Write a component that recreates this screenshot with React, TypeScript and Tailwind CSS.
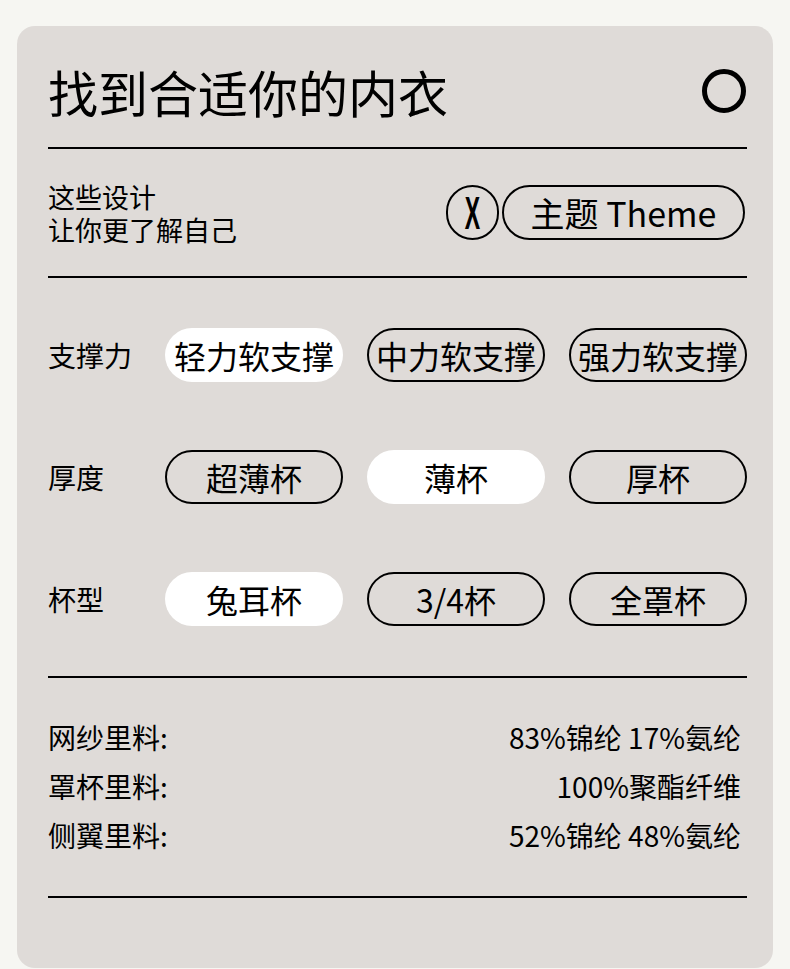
import React from "react";

const font = { fontFamily: '"Noto Sans CJK SC", "Noto Sans", sans-serif' };

function Pill({ text, active }: { text: string; active?: boolean }) {
  return (
    <div
      className={
        "flex h-[54px] w-[178px] items-center justify-center rounded-full text-[32px] leading-none text-black " +
        (active ? "bg-white" : "border-2 border-black")
      }
    >
      {text}
    </div>
  );
}

function Row({ label, items, activeIndex }: { label: string; items: string[]; activeIndex: number }) {
  return (
    <div className="flex h-[54px] items-center">
      <div className="w-[118px] text-[28px] leading-none text-black">{label}</div>
      <div className="flex gap-[24px]">
        {items.map((t, i) => (
          <Pill key={t} text={t} active={i === activeIndex} />
        ))}
      </div>
    </div>
  );
}

function Line() {
  return <div className="h-[2px] w-full bg-black" />;
}

export default function App() {
  return (
    <div className="min-h-[969px] w-[790px] bg-[#f6f6f2] pt-[26px]" style={font}>
      <div className="ml-[17px] w-[756px] rounded-[18px] bg-[#dfdbd8] pb-[70px] pl-[31px] pr-[26px]">
        {/* Header */}
        <div className="flex h-[121px] items-start pt-[39px]">
          <div className="flex h-[52px] w-full items-center justify-between">
            <div className="text-[50px] leading-none text-black">找到合适你的内衣</div>
            <div className="mr-[1px] h-[44px] w-[44px] rounded-full border-[5px] border-black" />
          </div>
        </div>
        <Line />
        {/* Theme */}
        <div className="flex h-[127px] items-center justify-between">
          <div className="flex flex-col text-[27px] leading-none text-black">
            <div className="h-[33px]">这些设计</div>
            <div className="h-[27px]">让你更了解自己</div>
          </div>
          <div className="flex items-center gap-[3px] pr-[2px]">
            <div className="flex h-[55px] w-[53px] items-center justify-center rounded-full border-2 border-black">
              <span
                className="inline-block scale-x-[0.5] text-[46px] font-bold leading-none text-black"
                style={{ fontFamily: '"Liberation Sans", sans-serif' }}
              >
                X
              </span>
            </div>
            <div className="flex h-[55px] w-[243px] items-center justify-center rounded-full border-2 border-black text-[34px] leading-none text-black">
              主题 Theme
            </div>
          </div>
        </div>
        <Line />
        {/* Options */}
        <div className="flex flex-col gap-[68px] py-[50px]">
          <Row label="支撑力" items={["轻力软支撑", "中力软支撑", "强力软支撑"]} activeIndex={0} />
          <Row label="厚度" items={["超薄杯", "薄杯", "厚杯"]} activeIndex={1} />
          <Row label="杯型" items={["兔耳杯", "3/4杯", "全罩杯"]} activeIndex={0} />
        </div>
        <Line />
        {/* Specs */}
        <div className="flex flex-col pb-[36px] pr-[6px] pt-[35px] text-[28px] leading-[49px] text-black">
          <div className="flex justify-between">
            <span>网纱里料:</span>
            <span>83%锦纶 17%氨纶</span>
          </div>
          <div className="flex justify-between">
            <span>罩杯里料:</span>
            <span>100%聚酯纤维</span>
          </div>
          <div className="flex justify-between">
            <span>侧翼里料:</span>
            <span>52%锦纶 48%氨纶</span>
          </div>
        </div>
        <Line />
      </div>
    </div>
  );
}
